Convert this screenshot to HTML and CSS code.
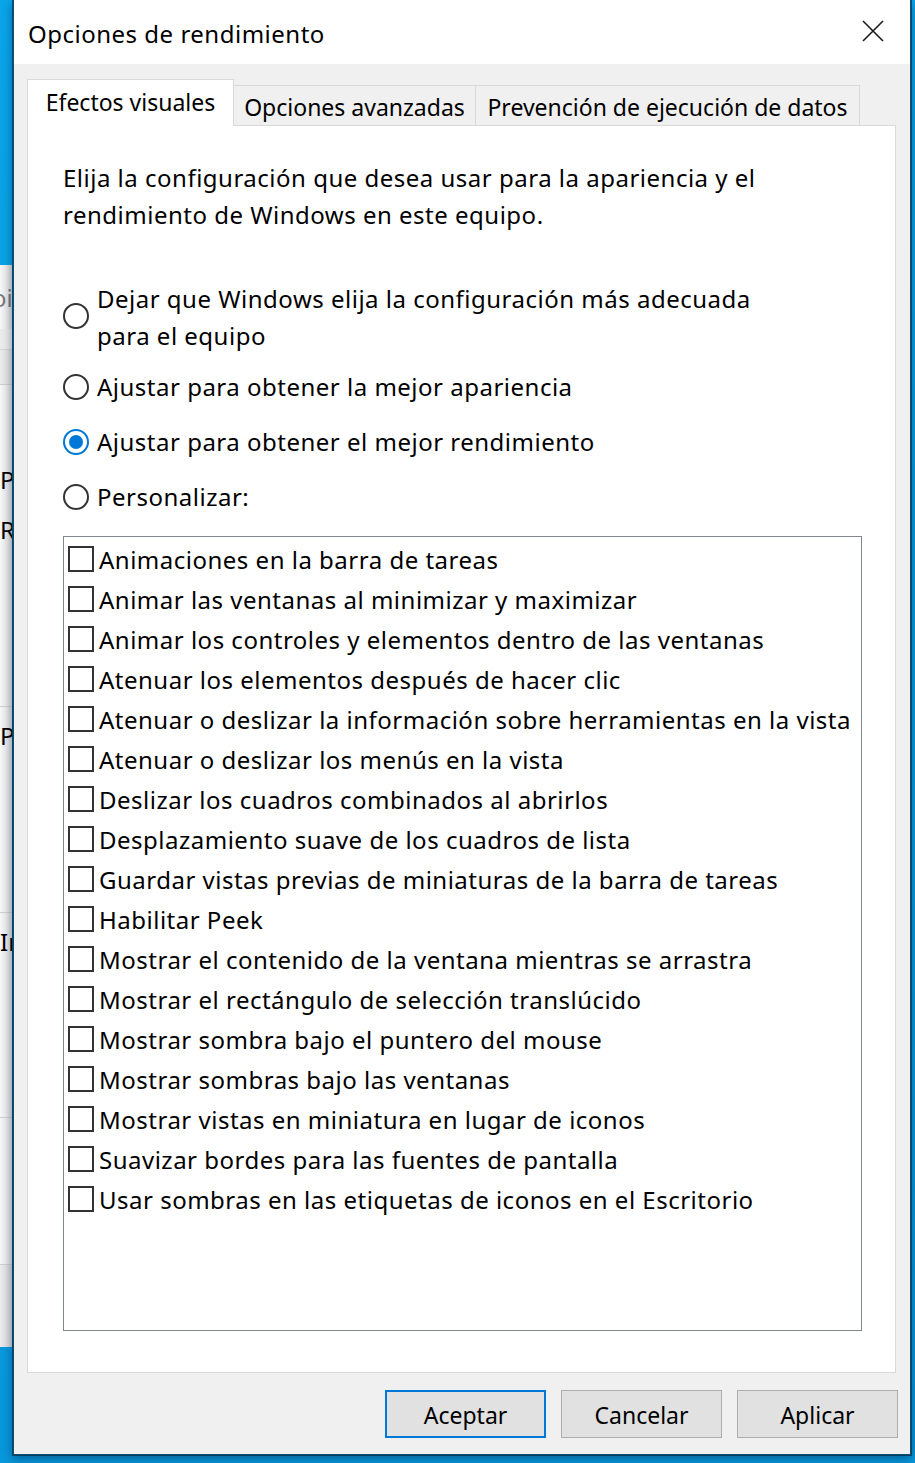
FILE: index.html
```html
<!DOCTYPE html>
<html lang="es">
<head>
<meta charset="utf-8">
<title>Opciones de rendimiento</title>
<link rel="stylesheet" href="styles.css">
</head>
<body>
<div class="desk">
  <div class="bgwin">
    <div class="bg-row bg-top"><span class="bg-txt grey shift">oi</span></div>
    <div class="bg-row bg-band1"></div>
    <div class="bg-row bg-band2"></div>
    <div class="bg-row bg-sec1">
      <span class="bg-txt p1">P</span>
      <span class="bg-txt r1">R</span>
    </div>
    <div class="bg-row bg-sec2"><span class="bg-txt p2">P</span></div>
    <div class="bg-row bg-sec3"><span class="bg-txt in">In</span></div>
    <div class="bg-row bg-sec4"></div>
    <div class="bg-row bg-sec5"></div>
    <div class="bg-row bg-sec6"></div>
  </div>

  <div class="dialog">
    <div class="titlebar">
      <span class="title">Opciones de rendimiento</span>
      <svg class="close" width="22" height="22" viewBox="0 0 22 22" aria-label="Cerrar">
        <path d="M1 1 L21 21 M21 1 L1 21" stroke="#1a1a1a" stroke-width="1.6" fill="none"/>
      </svg>
    </div>

    <div class="content">
      <div class="tabs">
        <div class="tab active t1">Efectos visuales</div>
        <div class="tab t2">Opciones avanzadas</div>
        <div class="tab t3">Prevención de ejecución de datos</div>
      </div>

      <div class="panel">
        <p class="intro">Elija la configuración que desea usar para la apariencia y el rendimiento de Windows en este equipo.</p>

        <div class="radios">
          <div class="radio two"><span class="rb"></span><span class="rlabel">Dejar que Windows elija la configuración más adecuada<br>para el equipo</span></div>
          <div class="radio"><span class="rb"></span><span class="rlabel">Ajustar para obtener la mejor apariencia</span></div>
          <div class="radio"><span class="rb on"></span><span class="rlabel">Ajustar para obtener el mejor rendimiento</span></div>
          <div class="radio"><span class="rb"></span><span class="rlabel">Personalizar:</span></div>
        </div>

        <div class="list">
          <div class="item"><span class="cb"></span><span>Animaciones en la barra de tareas</span></div>
          <div class="item"><span class="cb"></span><span>Animar las ventanas al minimizar y maximizar</span></div>
          <div class="item"><span class="cb"></span><span>Animar los controles y elementos dentro de las ventanas</span></div>
          <div class="item"><span class="cb"></span><span>Atenuar los elementos después de hacer clic</span></div>
          <div class="item"><span class="cb"></span><span>Atenuar o deslizar la información sobre herramientas en la vista</span></div>
          <div class="item"><span class="cb"></span><span>Atenuar o deslizar los menús en la vista</span></div>
          <div class="item"><span class="cb"></span><span>Deslizar los cuadros combinados al abrirlos</span></div>
          <div class="item"><span class="cb"></span><span>Desplazamiento suave de los cuadros de lista</span></div>
          <div class="item"><span class="cb"></span><span>Guardar vistas previas de miniaturas de la barra de tareas</span></div>
          <div class="item"><span class="cb"></span><span>Habilitar Peek</span></div>
          <div class="item"><span class="cb"></span><span>Mostrar el contenido de la ventana mientras se arrastra</span></div>
          <div class="item"><span class="cb"></span><span>Mostrar el rectángulo de selección translúcido</span></div>
          <div class="item"><span class="cb"></span><span>Mostrar sombra bajo el puntero del mouse</span></div>
          <div class="item"><span class="cb"></span><span>Mostrar sombras bajo las ventanas</span></div>
          <div class="item"><span class="cb"></span><span>Mostrar vistas en miniatura en lugar de iconos</span></div>
          <div class="item"><span class="cb"></span><span>Suavizar bordes para las fuentes de pantalla</span></div>
          <div class="item"><span class="cb"></span><span>Usar sombras en las etiquetas de iconos en el Escritorio</span></div>
        </div>
      </div>

      <div class="buttons">
        <button class="btn default">Aceptar</button>
        <button class="btn">Cancelar</button>
        <button class="btn">Aplicar</button>
      </div>
    </div>
  </div>
</div>
</body>
</html>
```

FILE: styles.css
```css
* { box-sizing: border-box; }
html, body { margin: 0; padding: 0; }
body {
  width: 915px;
  height: 1463px;
  overflow: hidden;
  background: linear-gradient(180deg, #0aa6ea 0%, #0898dc 100%);
  font-family: "Noto Sans", "Segoe UI", sans-serif;
  font-size: 24px;
  letter-spacing: 0.5px;
  color: #000;
}
.desk {
  display: flex;
  align-items: flex-start;
  height: 100%;
}

/* background window strip */
.bgwin {
  width: 12px;
  flex: none;
  margin-top: 265px;
  height: 1082px;
  background: linear-gradient(90deg, #f8f8f8, #e0e0e0);
  overflow: hidden;
  display: flex;
  flex-direction: column;
}
.bg-row { flex: none; white-space: nowrap; display: flex; flex-direction: column; }
.bg-txt { font-size: 24px; line-height: 30px; display: block; letter-spacing: 0; }
.bg-txt.grey { color: #7a7a7a; }
.bg-txt.shift { margin-left: -8px; margin-top: 18px; }
.bg-top { height: 64px; }
.bg-band1 { height: 20px; background: #ececec; }
.bg-band2 { height: 36px; background: linear-gradient(90deg, #ececec, #dedede); border-top: 1px solid #d6d6d6; border-bottom: 1px solid #cfcfcf; }
.bg-sec1 { height: 322px; border-bottom: 1px solid #d0d0d0; }
.p1 { margin-top: 80px; }
.r1 { margin-top: 20px; }
.bg-sec2 { height: 206px; border-bottom: 1px solid #d0d0d0; }
.p2 { margin-top: 14px; }
.bg-sec3 { height: 205px; border-bottom: 1px solid #d0d0d0; }
.in { margin-top: 14px; }
.bg-sec4 { height: 147px; border-bottom: 1px solid #d0d0d0; }
.bg-sec5 { height: 82px; background: linear-gradient(90deg, #ececec, #d9d9d9); }
.bg-sec6 { flex: 1; background: linear-gradient(90deg, #e8e8e8, #d6d6d6); }

/* dialog */
.dialog {
  width: 900px;
  flex: none;
  height: 1456px;
  background: #f0f0f0;
  background-clip: padding-box;
  border: 2px solid rgba(12, 32, 48, 0.62);
  border-top: 0;
  box-shadow: 0 3px 10px rgba(0, 30, 70, 0.45);
  display: flex;
  flex-direction: column;
}
.titlebar {
  height: 64px;
  flex: none;
  background: #fff;
  display: flex;
  align-items: center;
  justify-content: space-between;
  padding: 0 26px 0 14px;
}
.title { font-size: 24px; line-height: 30px; padding-top: 4px; }
.close { display: block; margin-top: -2px; }

.content {
  flex: 1;
  display: flex;
  flex-direction: column;
  padding: 15px 12px 0 13px;
}

/* tabs */
.tabs {
  display: flex;
  align-items: flex-end;
  margin-bottom: -1px;
  position: relative;
  z-index: 1;
}
.tab {
  display: flex;
  align-items: center;
  justify-content: center;
  white-space: nowrap;
  font-size: 23px;
  letter-spacing: 0;
  border: 1px solid #d9d9d9;
  background: #f0f0f0;
  height: 41px;
  padding-top: 2px;
  border-left: 0;
}
.tab.active {
  height: 47px;
  background: #fff;
  border-left: 1px solid #d9d9d9;
  border-bottom: 0;
  padding-top: 0;
  padding-bottom: 2px;
}
.t1 { width: 207px; }
.t2 { width: 242px; }
.t3 { width: 384px; }

/* panel */
.panel {
  height: 1248px;
  flex: none;
  width: 869px;
  background: #fff;
  border: 1px solid #d9d9d9;
  padding: 33px 33px 0 35px;
}
.intro {
  margin: 0;
  line-height: 37px;
  width: 760px;
}
.radios {
  display: flex;
  flex-direction: column;
  gap: 18px;
  margin-top: 47px;
}
.radio {
  display: flex;
  align-items: center;
  line-height: 37px;
}
.radio.two { margin-bottom: -4px; }
.rb {
  flex: none;
  width: 26px;
  height: 26px;
  border: 2px solid #333;
  border-radius: 50%;
  margin-right: 8px;
  display: flex;
  align-items: center;
  justify-content: center;
}
.radio.two .rb { margin-top: -3px; }
.rb.on { border-color: #0078d7; }
.rb.on::after {
  content: "";
  width: 14px;
  height: 14px;
  border-radius: 50%;
  background: #0078d7;
}

/* list */
.list {
  margin-top: 21px;
  width: 799px;
  height: 795px;
  border: 1px solid #828790;
  padding: 2px 4px 0 4px;
  display: flex;
  flex-direction: column;
}
.item {
  height: 40px;
  display: flex;
  align-items: center;
  white-space: nowrap;
}
.cb {
  flex: none;
  width: 26px;
  height: 26px;
  border: 2px solid #333;
  margin-right: 5px;
  background: #fff;
}

/* buttons */
.buttons {
  display: flex;
  justify-content: flex-end;
  gap: 15px;
  margin-top: 17px;
}
.btn {
  width: 161px;
  height: 48px;
  font-family: inherit;
  font-size: 23px;
  letter-spacing: 0;
  color: #000;
  background: #e1e1e1;
  border: 1px solid #adadad;
  padding: 2px 0 0 0;
}
.btn.default { border: 2px solid #0078d7; }
```
